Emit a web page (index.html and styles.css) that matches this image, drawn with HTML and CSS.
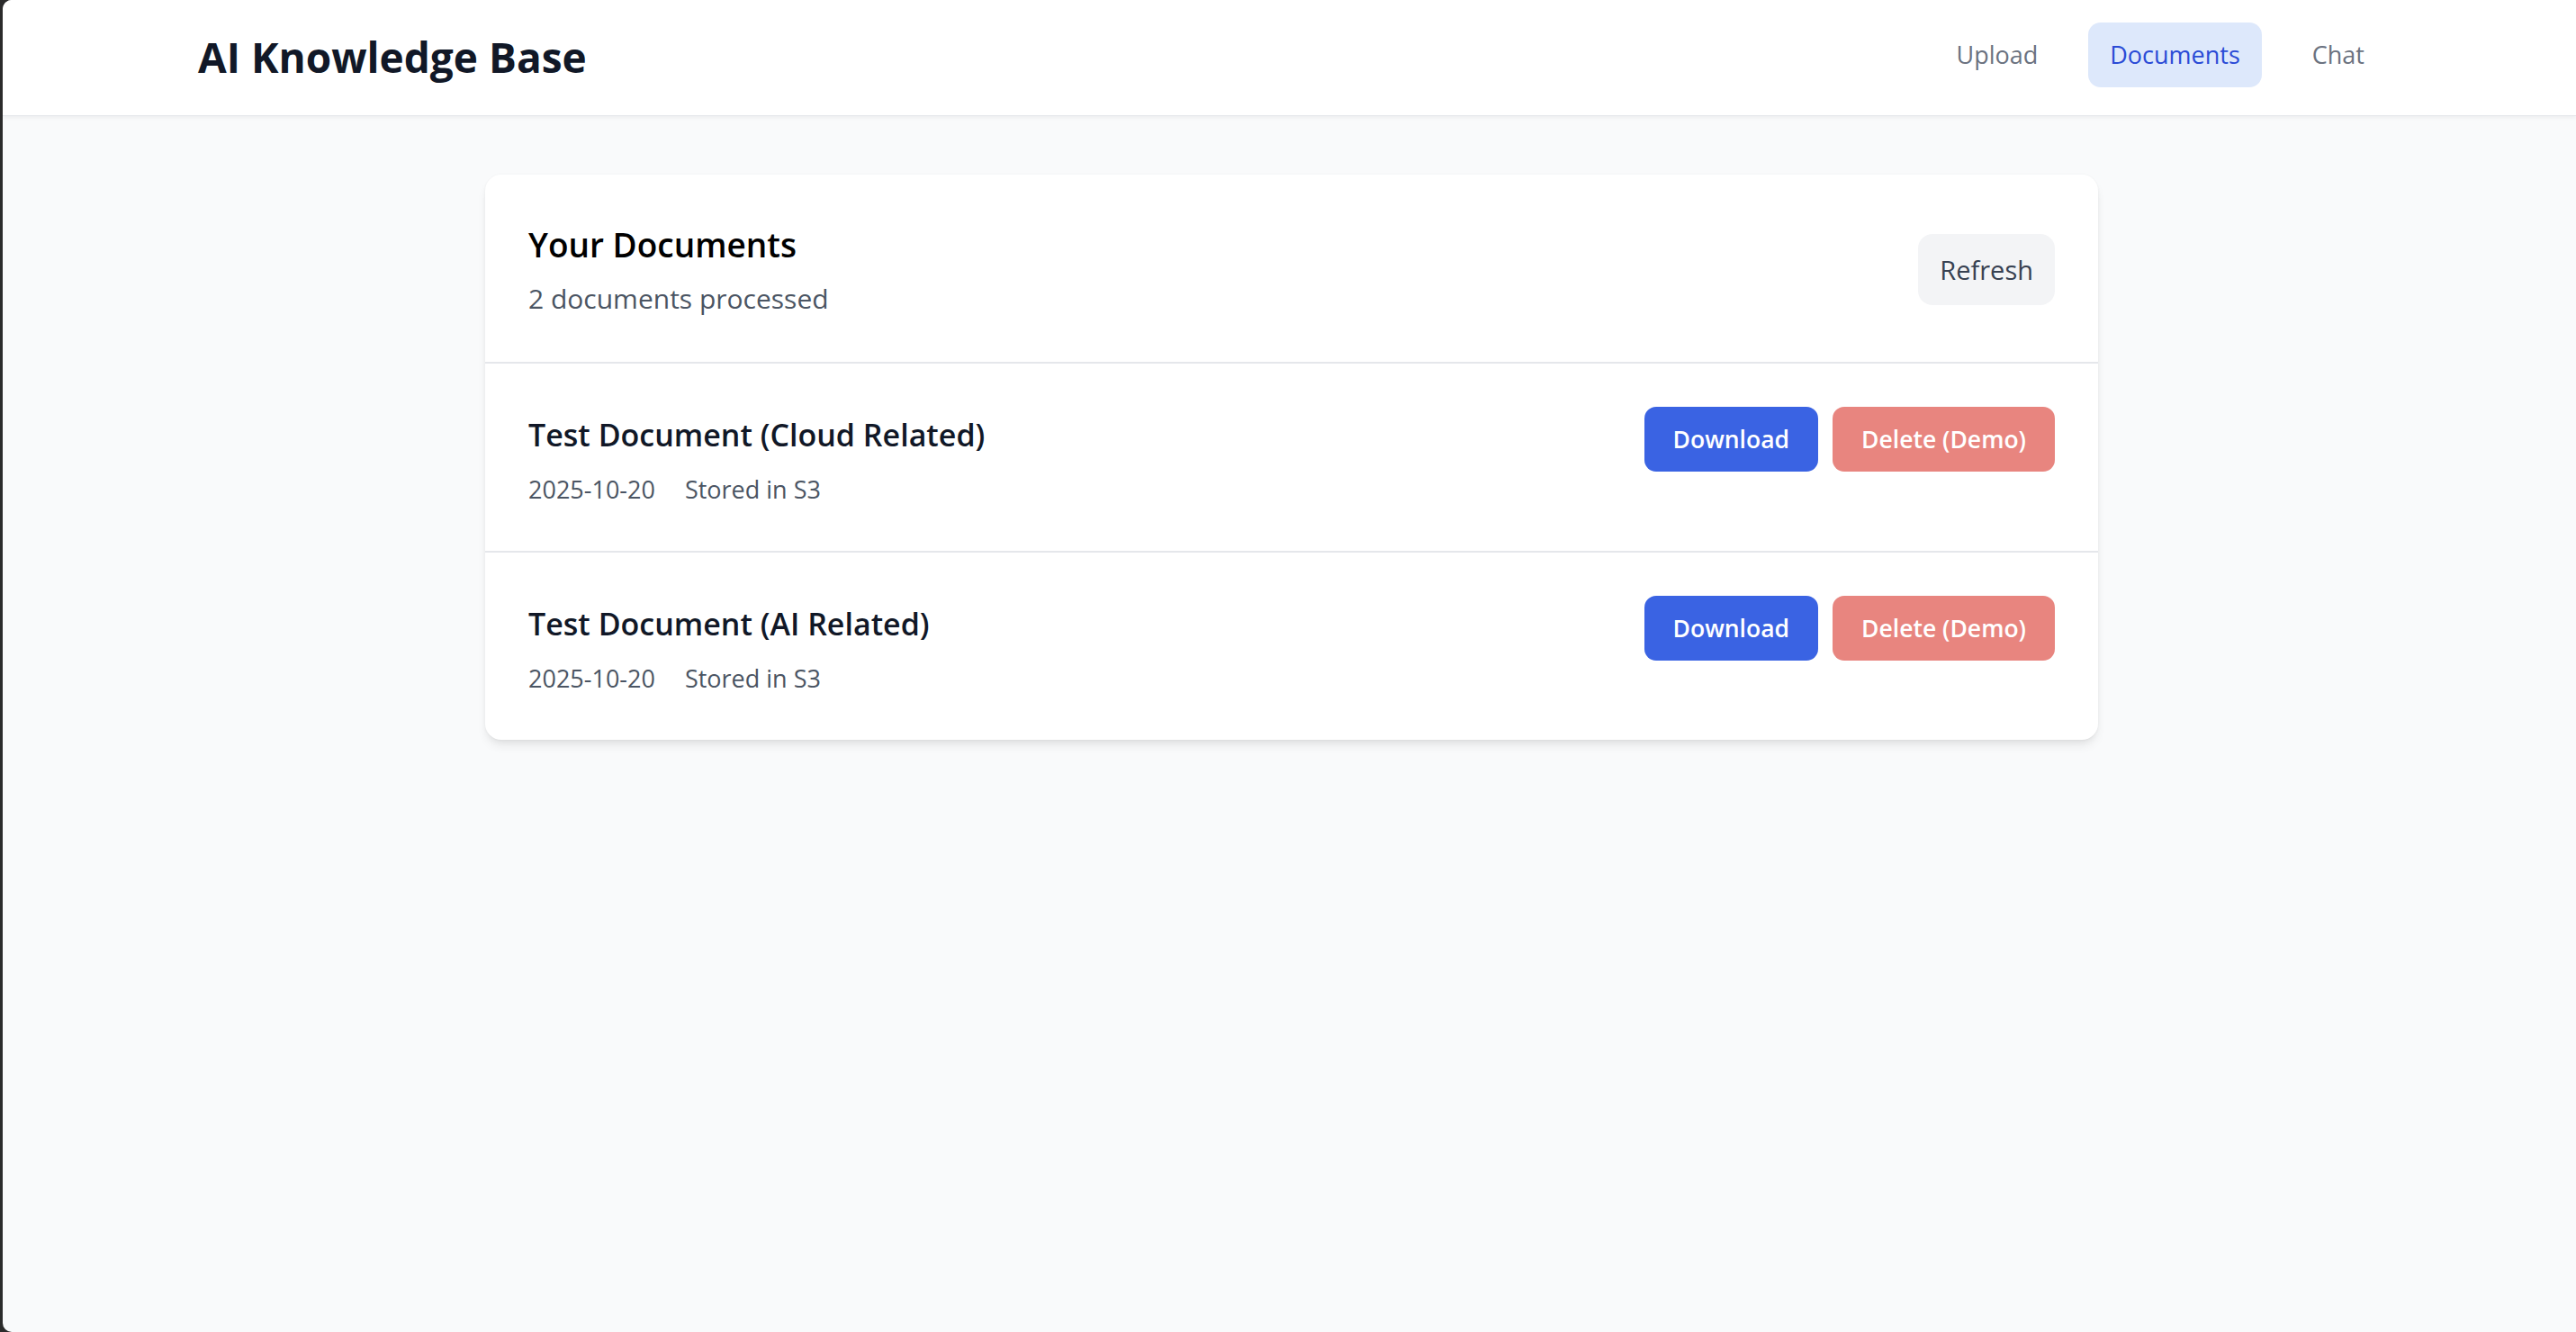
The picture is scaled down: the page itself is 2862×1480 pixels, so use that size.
FILE: index.html
```html
<!DOCTYPE html>
<html lang="en">
<head>
<meta charset="utf-8">
<title>AI Knowledge Base</title>
<link rel="stylesheet" href="styles.css">
</head>
<body>
<div class="app">
  <header class="topbar">
    <div class="topbar-inner">
      <h1 class="logo">AI Knowledge Base</h1>
      <nav class="nav">
        <a class="nav-link">Upload</a>
        <a class="nav-link nav-link-active">Documents</a>
        <a class="nav-link">Chat</a>
      </nav>
    </div>
  </header>
  <main class="main">
    <section class="card">
      <div class="card-head">
        <div class="card-head-text">
          <h2 class="card-title">Your Documents</h2>
          <p class="card-sub">2 documents processed</p>
        </div>
        <button class="btn btn-gray">Refresh</button>
      </div>
      <div class="doc-row">
        <div class="doc-info">
          <h3 class="doc-title">Test Document (Cloud Related)</h3>
          <div class="doc-meta"><span>2025-10-20</span><span>Stored in S3</span></div>
        </div>
        <div class="doc-actions">
          <button class="btn btn-blue">Download</button>
          <button class="btn btn-red">Delete (Demo)</button>
        </div>
      </div>
      <div class="doc-row">
        <div class="doc-info">
          <h3 class="doc-title">Test Document (AI Related)</h3>
          <div class="doc-meta"><span>2025-10-20</span><span>Stored in S3</span></div>
        </div>
        <div class="doc-actions">
          <button class="btn btn-blue">Download</button>
          <button class="btn btn-red">Delete (Demo)</button>
        </div>
      </div>
    </section>
  </main>
</div>
</body>
</html>
```
FILE: styles.css
```css
html {
  background: #2b2b2b;
}
body {
  margin: 0;
  padding-left: 3px;
  font-family: "Open Sans", "Noto Sans", sans-serif;
}
.app {
  min-height: 100vh;
  background: #f9fafb;
  border-radius: 10px 0 0 10px;
  overflow: hidden;
}
.topbar {
  background: #ffffff;
  height: 128px;
  border-bottom: 1px solid #e5e7eb;
  box-shadow: 0 2px 4px rgba(0, 0, 0, 0.05);
  position: relative;
}
.topbar-inner {
  height: 100%;
  display: flex;
  align-items: center;
  justify-content: space-between;
  padding: 0 211px 0 217px;
}
.logo {
  margin: -2px 0 0;
  font-size: 46px;
  line-height: 64px;
  font-weight: 700;
  color: #111827;
}
.nav {
  display: flex;
  gap: 32px;
  margin-top: -6px;
}
.nav-link {
  display: block;
  padding: 16px 24px;
  line-height: 40px;
  font-size: 27px;
  font-weight: 500;
  color: #6b7280;
  border-radius: 14px;
}
.nav-link-active {
  background: #dde8fb;
  color: #2a4bd6;
}
.main {
  padding: 65px 0 64px 5px;
}
.card {
  width: 1792px;
  margin: 0 auto;
  background: #ffffff;
  border-radius: 18px;
  box-shadow: 0 8px 12px -2px rgba(0, 0, 0, 0.08), 0 4px 8px -4px rgba(0, 0, 0, 0.08), 0 0 3px rgba(0, 0, 0, 0.04);
}
.card-head {
  display: flex;
  align-items: center;
  justify-content: space-between;
  padding: 48px 48px 46px;
  border-bottom: 2px solid #e5e7eb;
}
.card-title {
  margin: 0 0 8px;
  padding-top: 2px;
  font-size: 37px;
  line-height: 56px;
  font-weight: 600;
  color: #000000;
}
.card-sub {
  margin: 0;
  font-size: 30px;
  line-height: 48px;
  color: #4b5563;
}
.btn {
  border: 0;
  font-family: inherit;
  cursor: pointer;
}
.btn-gray {
  background: #f3f4f6;
  color: #374151;
  font-size: 29px;
  line-height: 48px;
  padding: 16px 24px 15px;
  border-radius: 16px;
}
.doc-row {
  display: flex;
  justify-content: space-between;
  align-items: flex-start;
  padding: 48px;
}
.doc-row + .doc-row {
  border-top: 2px solid #e5e7eb;
}
.doc-title {
  margin: 0;
  padding-top: 3px;
  font-size: 34px;
  line-height: 56px;
  font-weight: 600;
  color: #111827;
}
.doc-meta {
  display: flex;
  gap: 33px;
  margin-top: 13px;
  font-size: 27px;
  line-height: 40px;
  color: #4b5563;
}
.doc-actions {
  display: flex;
  gap: 16px;
}
.btn-blue,
.btn-red {
  color: #ffffff;
  font-size: 26.5px;
  font-weight: 600;
  line-height: 40px;
  padding: 16px 32px;
  border-radius: 13px;
}
.btn-blue {
  background: #3a63e3;
}
.btn-red {
  background: #e8857f;
}
```
